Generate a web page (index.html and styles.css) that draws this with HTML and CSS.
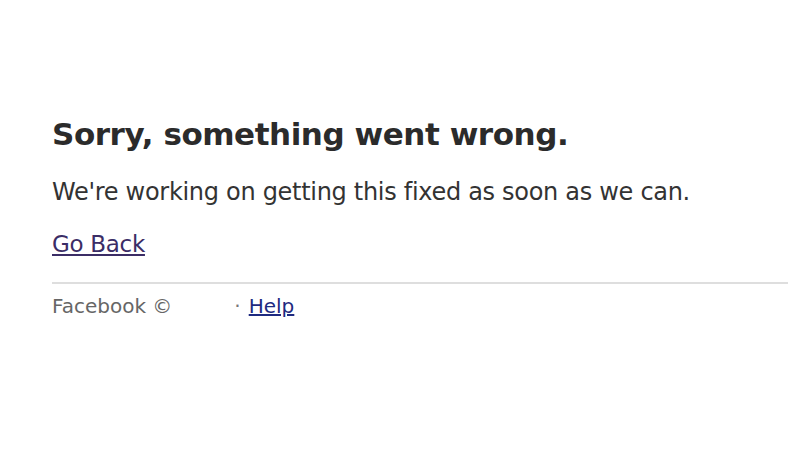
FILE: index.html
```html
<!DOCTYPE html>
<html>
<head>
<meta charset="utf-8">
<link rel="stylesheet" href="styles.css">
</head>
<body>
<div class="page">
  <div class="content">
    <h1 class="title">Sorry, something went wrong.</h1>
    <p class="message">We're working on getting this fixed as soon as we can.</p>
    <p class="back"><a class="back-link" href="#">Go Back</a></p>
  </div>
  <div class="footer">
    <span class="copy">Facebook ©</span><span class="year"></span><span class="dot">·</span><a class="help" href="#">Help</a>
  </div>
</div>
</body>
</html>
```

FILE: styles.css
```css
html, body {
  margin: 0;
  padding: 0;
  background: #fff;
}
.page {
  padding-top: 116px;
  font-family: "DejaVu Sans", "Lucida Grande", sans-serif;
}
.content {
  padding-left: 52px;
}
.title {
  margin: 0;
  font-size: 31px;
  letter-spacing: -0.45px;
  font-weight: bold;
  color: #2b2b2b;
  line-height: 36px;
}
.message {
  margin: 25px 0 0;
  font-size: 24px;
  letter-spacing: -0.3px;
  color: #333;
  line-height: 30px;
}
.back {
  margin: 22px 0 0;
  font-size: 23px;
  letter-spacing: -0.3px;
  line-height: 30px;
}
.back-link {
  color: #3b2d66;
  text-decoration: underline;
}
.footer {
  margin-left: 52px;
  margin-top: 23px;
  border-top: 2px solid #dedede;
  padding-top: 8px;
  font-size: 20px;
  line-height: 28px;
  color: #666;
  display: flex;
  align-items: baseline;
}
.year {
  display: inline-block;
  width: 62px;
}
.dot {
  color: #777;
  margin-right: 8px;
}
.help {
  color: #1e2a80;
  text-decoration: underline;
}
```
